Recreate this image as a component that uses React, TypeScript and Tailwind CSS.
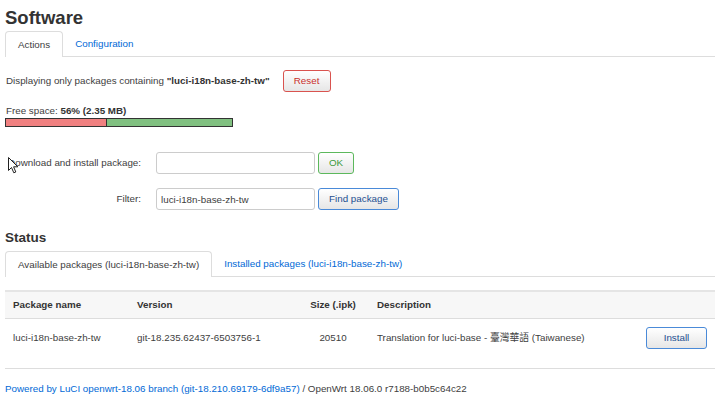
const btn =
  "inline-flex items-center justify-center h-[22px] rounded-[3px] border bg-linear-to-b from-white to-[#e6e6e6] text-[9.8px] leading-none";

function Tabs({ items }: { items: { label: string; active?: boolean }[] }) {
  return (
    <div className="flex h-[26px] border-b border-[#ddd]">
      {items.map((t) =>
        t.active ? (
          <div
            key={t.label}
            className="-mb-px flex h-[26px] items-center rounded-t-[4px] border border-b-0 border-[#ddd] bg-white px-[12px] text-[#404040]"
          >
            {t.label}
          </div>
        ) : (
          <div key={t.label} className="flex h-[25px] items-center px-[12px] text-[#0069d6]">
            {t.label}
          </div>
        )
      )}
    </div>
  );
}

export default function App() {
  return (
    <div
      className="relative min-h-[408px] bg-white px-[5px] pt-[7px] text-[9.8px] leading-[12px] text-[#404040]"
      style={{ fontFamily: '"Liberation Sans", Arial, "Noto Sans CJK TC", sans-serif' }}
    >
      <h2 className="text-[18.5px] font-bold leading-[22px] text-[#333]">Software</h2>

      <div className="mt-[2px]">
        <Tabs items={[{ label: "Actions", active: true }, { label: "Configuration" }]} />
      </div>

      {/* filter notice */}
      <div className="mt-[13px] flex items-center pl-px">
        <span>
          Displaying only packages containing <b className="text-[#333]">"luci-i18n-base-zh-tw"</b>
        </span>
        <button className={`${btn} ml-[13px] w-[48px] border-[#d9534f] text-[#c9302c]`}>Reset</button>
      </div>

      {/* free space */}
      <div className="mt-[13px]">
        <div className="pl-px">
          Free space: <b className="text-[#333]">56% (2.35 MB)</b>
        </div>
        <div className="mt-[1px] flex h-[9px] w-[228px] border border-[#333]">
          <div className="w-[100px] bg-[#f08080]" />
          <div className="flex-1 border-l border-[#333] bg-[#80c080]" />
        </div>
      </div>

      {/* install / filter form */}
      <div className="mt-[25px] flex items-center">
        <label className="mr-[15px] w-[136px] text-right">Download and install package:</label>
        <input
          className="h-[22px] w-[159px] rounded-[3px] border border-[#ccc] bg-white px-[4px] text-[9.8px] outline-none"
          defaultValue=""
        />
        <button className={`${btn} ml-[3px] w-[36px] border-[#5cb85c] text-[#3c9a3c]`}>OK</button>
      </div>
      <div className="mt-[14px] flex items-center">
        <label className="mr-[15px] w-[136px] text-right">Filter:</label>
        <input
          className="h-[22px] w-[159px] rounded-[3px] border border-[#ccc] bg-white px-[4px] text-[9.8px] text-[#404040] outline-none"
          defaultValue="luci-i18n-base-zh-tw"
        />
        <button className={`${btn} ml-[3px] w-[81px] border-[#4a8ad8] text-[#1d4f91]`}>Find package</button>
      </div>

      <h3 className="mt-[20px] text-[13.5px] font-bold leading-[16px] text-[#333]">Status</h3>

      <div className="mt-[5px]">
        <Tabs
          items={[
            { label: "Available packages (luci-i18n-base-zh-tw)", active: true },
            { label: "Installed packages (luci-i18n-base-zh-tw)" },
          ]}
        />
      </div>

      {/* package table */}
      <div className="mt-[13px]">
        <div className="flex h-[29px] items-center border-t-2 border-b border-t-[#e5e5e5] border-b-[#ddd] bg-[#f7f7f7] font-bold text-[#333]">
          <div className="w-[124px] px-[8px]">Package name</div>
          <div className="w-[168px] px-[8px]">Version</div>
          <div className="w-[72px] px-[8px] text-center">Size (.ipk)</div>
          <div className="flex-1 px-[8px]">Description</div>
        </div>
        <div className="flex h-[50px] items-start border-b border-[#ddd]">
          <div className="w-[124px] px-[8px] pt-[13px]">luci-i18n-base-zh-tw</div>
          <div className="w-[168px] px-[8px] pt-[13px]">git-18.235.62437-6503756-1</div>
          <div className="w-[72px] px-[8px] pt-[13px] text-center">20510</div>
          <div className="flex-1 px-[8px] pt-[13px]">Translation for luci-base - 臺灣華語 (Taiwanese)</div>
          <div className="pr-[8px] pt-[8px]">
            <button className={`${btn} h-[21px] w-[61px] border-[#4a8ad8] text-[#1d4f91]`}>Install</button>
          </div>
        </div>
      </div>

      <footer className="mt-[14px]">
        <a className="text-[#0069d6]">Powered by LuCI openwrt-18.06 branch (git-18.210.69179-6df9a57)</a>
        <span> / OpenWrt 18.06.0 r7188-b0b5c64c22</span>
      </footer>

      {/* mouse pointer captured in the screenshot */}
      <svg className="absolute left-[8px] top-[157px]" width="11" height="17" viewBox="0 0 11 17">
        <path d="M0.5 0.5 L0.5 13.5 L3.5 10.5 L5.8 15.8 L7.8 15 L5.6 9.8 L9.8 9.8 Z" fill="white" stroke="#222" strokeWidth="1" />
      </svg>
    </div>
  );
}
